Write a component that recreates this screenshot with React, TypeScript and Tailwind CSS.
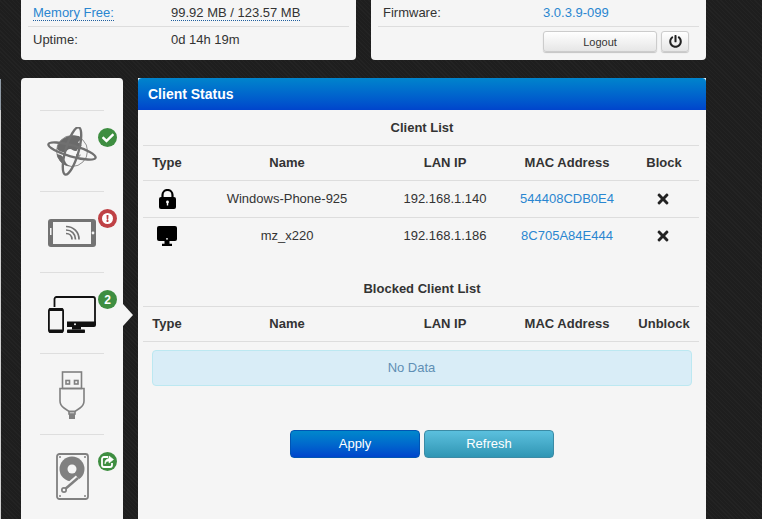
import React from "react";
import { FaCheck, FaTimes, FaPowerOff, FaExclamation } from "react-icons/fa";

const blue = "text-[#2a86d0]";
const thCols = "grid grid-cols-[48px_192px_124px_120px_1fr] items-center text-center";

function Badge({ color, children }: { color: string; children: React.ReactNode }) {
  return (
    <span
      className="absolute left-[58px] top-[17px] flex h-[19px] w-[19px] items-center justify-center rounded-full text-[12px] font-bold text-white"
      style={{ background: color }}
    >
      {children}
    </span>
  );
}

function Globe() {
  return (
    <svg width="50" height="50" viewBox="0 0 50 50" fill="none">
      <circle cx="25" cy="24" r="15.500" fill="#f5f5f5" stroke="#8f8f8f" strokeWidth="1" />
      <path d="M10 22C11 13 19 8.500 27 8.500c3.500 0 6 .8 8 2.500-1 2-3 2.500-4 4.500 1.500 1 3.500 1 3.500 3.500-2 2-4 2.500-5 5-3 .5-4.500-2-6.500-2-3 0-3 3-5 3-3.500 0-6-.5-8.500-3.500z" fill="#6a6a6a" />
      <path d="M9.800 27c2.500.5 5 1 6.200 3 1 3 2.500 4 3 6 1 1.500 3 2.500 5 3.300C16 39 11 33.500 9.800 27z" fill="#6a6a6a" />
      <path d="M29 27c2 0 3 1 5 .5-1 2-2 3.500-4 4-1-1.500-1-3-1-4.500z" fill="#9a9a9a" />
      <ellipse cx="25" cy="24" rx="24.500" ry="5.500" transform="rotate(16 25 24)" stroke="#707070" strokeWidth="2.400" />
      <ellipse cx="25" cy="24" rx="24.500" ry="6.500" transform="rotate(-74 25 24)" stroke="#707070" strokeWidth="2.400" />
    </svg>
  );
}

function Tablet() {
  return (
    <svg width="48" height="28" viewBox="0 0 48 28" fill="none">
      <rect width="48" height="28" rx="3" fill="#737373" />
      <rect x="5" y="3" width="38" height="22" fill="#f5f5f5" />
      <rect x="2" y="9" width="1.500" height="7" fill="#f5f5f5" />
      <circle cx="45" cy="14" r="1.400" fill="#f5f5f5" />
      <path d="M18 14.500c3.500 0 6 2.500 6 6M18 11c5.500 0 9.500 4 9.500 9.500M18 7.500c7.500 0 13 5.500 13 13" stroke="#737373" strokeWidth="1.700" />
    </svg>
  );
}

function Devices() {
  return (
    <svg width="48" height="37" viewBox="0 0 48 37" fill="none">
      <path d="M6.500 11V3a2 2 0 0 1 2-2H45a2 2 0 0 1 2 2v23" stroke="#111" strokeWidth="1.800" />
      <path d="M19 25.500h29V29a2 2 0 0 1-2 2H19z" fill="#111" />
      <circle cx="27" cy="28.300" r="1" fill="#f5f5f5" />
      <path d="M24 31h9v2.500h-9z" fill="#111" />
      <rect x="19" y="33.500" width="18" height="3.500" rx="0.800" fill="#111" />
      <rect x="0.900" y="12.900" width="14.200" height="23.200" rx="2" stroke="#111" strokeWidth="1.800" fill="#f5f5f5" />
      <rect x="1" y="12" width="14" height="3" rx="1" fill="#111" />
      <rect x="1" y="33.500" width="14" height="3.500" rx="1" fill="#111" />
    </svg>
  );
}

function Usb() {
  return (
    <svg width="26" height="48" viewBox="0 0 26 48" fill="none" stroke="#808080" strokeWidth="1.600">
      <rect x="3.500" y="1" width="19" height="16.500" />
      <rect x="7" y="9.500" width="3.500" height="3.500" />
      <rect x="15.500" y="9.500" width="3.500" height="3.500" />
      <path d="M1 17.500h24V30c0 3-1 5-4 7l-5 3.500h-6L5 37c-3-2-4-4-4-7z" />
      <rect x="10" y="40.500" width="6" height="2.500" />
      <rect x="10" y="43" width="6" height="5" fill="#808080" stroke="none" />
    </svg>
  );
}

function Hdd() {
  return (
    <svg width="33" height="47" viewBox="0 0 33 47" fill="none">
      <rect x="1" y="1" width="31" height="45" rx="2.500" stroke="#808080" strokeWidth="1.800" />
      <circle cx="16" cy="16" r="12.500" fill="#808080" />
      <circle cx="16" cy="16" r="4.500" fill="#f5f5f5" />
      <path d="M7 38l15-13" stroke="#f5f5f5" strokeWidth="6.500" />
      <path d="M8 37l14-12" stroke="#808080" strokeWidth="2.500" />
      <circle cx="8" cy="37" r="3" fill="#808080" />
      <circle cx="8" cy="37" r="1.300" fill="#f5f5f5" />
      <circle cx="4" cy="4" r="1" fill="#808080" />
      <circle cx="29" cy="4" r="1" fill="#808080" />
      <circle cx="4" cy="43" r="1" fill="#808080" />
      <circle cx="29" cy="43" r="1" fill="#808080" />
    </svg>
  );
}

function Lock() {
  return (
    <svg width="17" height="20" viewBox="0 0 17 20">
      <path d="M3.500 9V6a5 5 0 0 1 10 0v3" fill="none" stroke="#000" strokeWidth="2.200" />
      <rect y="8" width="17" height="12" rx="2" fill="#000" />
      <circle cx="8.500" cy="13" r="1.400" fill="#fff" />
      <rect x="7.800" y="13" width="1.400" height="3.500" fill="#fff" />
    </svg>
  );
}

function Desktop() {
  return (
    <svg width="20" height="20" viewBox="0 0 20 20">
      <rect width="20" height="15" rx="2" fill="#000" />
      <circle cx="10" cy="12.800" r="0.900" fill="#fff" />
      <path d="M7.500 15h5v2.800h2.500V20H5v-2.200h2.500z" fill="#000" />
    </svg>
  );
}

function ShareIcon() {
  return (
    <svg width="13" height="13" viewBox="0 0 13 13" fill="none" stroke="#fff" strokeWidth="1.800">
      <path d="M7 2H3a2 2 0 0 0-2 2v6a2 2 0 0 0 2 2h6a2 2 0 0 0 2-2V8" />
      <path d="M8 1l4.500 3.500L8 8V6C6 6 4.500 7 4 9c-.5-3 1-5 4-5.500z" fill="#fff" strokeWidth="0.600" />
    </svg>
  );
}

function NavItem({ icon, badge, active }: { icon: React.ReactNode; badge?: React.ReactNode; active?: boolean }) {
  return (
    <div className="relative mx-[19px] flex h-[81px] items-center justify-center border-t border-[#dedede] pt-[2px]">
      {icon}
      {badge}
      {active && (
        <span className="absolute left-[83px] top-[31px] h-0 w-0 border-y-[11px] border-l-[10px] border-y-transparent border-l-[#f5f5f5]" />
      )}
    </div>
  );
}

function TableHead({ last }: { last: string }) {
  return (
    <div className={`${thCols} h-[35px] border-b border-[#dddddd] font-bold text-[#333]`}>
      <span>Type</span>
      <span>Name</span>
      <span>LAN IP</span>
      <span>MAC Address</span>
      <span className="pl-[2px]">{last}</span>
    </div>
  );
}

export default function App() {
  return (
    <div
      className="relative flex h-[519px] w-[762px] flex-col overflow-hidden bg-[#1f1f1f] bg-[repeating-linear-gradient(45deg,#232323_0px,#232323_1px,#1e1e1e_1px,#1e1e1e_3px)] text-[13px] text-[#333]"
      style={{ fontFamily: '"Liberation Sans", Arial, sans-serif' }}
    >
      <div className="flex gap-[15px] pl-[21px]">
        <div className="h-[60px] w-[335px] rounded-b bg-[#f5f5f5]">
          <div className="mx-[7px] border-b border-[#dddddd]">
            <div className="grid h-[26px] grid-cols-[138px_1fr] items-center px-[5px]">
              <span className={`w-fit border-b border-dotted border-[#1f5f9f] leading-[15px] ${blue}`}>Memory Free:</span>
              <span className="w-fit border-b border-dotted border-[#1f5f9f] leading-[15px]">99.92 MB / 123.57 MB</span>
            </div>
          </div>
          <div className="grid h-[25px] grid-cols-[138px_1fr] items-center px-3">
            <span>Uptime:</span>
            <span>0d 14h 19m</span>
          </div>
        </div>
        <div className="h-[60px] w-[335px] rounded-b bg-[#f5f5f5]">
          <div className="mx-[7px] border-b border-[#dddddd]">
            <div className="grid h-[26px] grid-cols-[160px_1fr] items-center px-[5px]">
              <span>Firmware:</span>
              <span className={blue}>3.0.3.9-099</span>
            </div>
          </div>
          <div className="flex justify-end gap-[4px] pr-[17px] pt-[4px]">
            <button className="h-[21px] w-[114px] rounded-[3px] border border-[#cccccc] bg-gradient-to-b from-white to-[#e6e6e6] pt-[1px] text-[11px] text-[#333] shadow-[0_1px_1px_rgba(0,0,0,0.2)]">
              Logout
            </button>
            <button className="flex h-[21px] w-[28px] items-center justify-center rounded-[3px] border border-[#cccccc] bg-gradient-to-b from-white to-[#e6e6e6] shadow-[0_1px_1px_rgba(0,0,0,0.2)]">
              <FaPowerOff className="text-[13px] text-[#222]" />
            </button>
          </div>
        </div>
      </div>

      <div className="mt-[18px] flex min-h-0 flex-1">
        <div className="mr-[20px] flex w-px flex-col">
          <div className="mt-px h-[31px] bg-[#8f9aa5]" />
          <div className="flex-1 bg-[#cfcfcf]" />
        </div>
        <div className="mr-[15px] w-[102px] rounded-t bg-[#f5f5f5] pt-[32px]">
          <NavItem icon={<Globe />} badge={<Badge color="#3e8e41"><FaCheck className="text-[12px]" /></Badge>} />
          <NavItem
            icon={<Tablet />}
            badge={
              <Badge color="#bf4145">
                <span className="flex h-[11px] w-[11px] items-center justify-center rounded-full bg-white">
                  <FaExclamation className="text-[7px] text-[#bf4145]" />
                </span>
              </Badge>
            }
          />
          <NavItem icon={<Devices />} badge={<Badge color="#3e8e41">2</Badge>} active />
          <NavItem icon={<Usb />} />
          <NavItem icon={<Hdd />} badge={<Badge color="#3e8e41"><ShareIcon /></Badge>} />
        </div>

        <div className="w-[568px] bg-[#f5f5f5]">
          <div className="flex h-[32px] items-center rounded-t bg-gradient-to-b from-[#0084cc] to-[#0044cc] pl-[10px] text-[14px] font-bold text-white">
            Client Status
          </div>
          <div className="pl-[5px] pr-[7px]">
            <div className="flex h-[36px] items-center justify-center border-b border-[#dddddd] font-bold">
              <span className="pl-[2px]">Client List</span>
            </div>
            <TableHead last="Block" />
            <div className={`${thCols} h-[37px] border-b border-[#dddddd]`}>
              <span className="flex justify-center"><Lock /></span>
              <span>Windows-Phone-925</span>
              <span>192.168.1.140</span>
              <span className={blue}>544408CDB0E4</span>
              <span className="flex justify-center"><FaTimes className="text-[16px] text-[#222]" /></span>
            </div>
            <div className={`${thCols} h-[36px]`}>
              <span className="flex justify-center"><Desktop /></span>
              <span>mz_x220</span>
              <span>192.168.1.186</span>
              <span className={blue}>8C705A84E444</span>
              <span className="flex justify-center"><FaTimes className="text-[16px] text-[#222]" /></span>
            </div>
            <div className="mt-[17px] flex h-[36px] items-center justify-center border-b border-[#dddddd] font-bold">
              <span className="pl-[2px]">Blocked Client List</span>
            </div>
            <TableHead last="Unblock" />
            <div className="ml-[9px] mr-[7px] mt-[8px] flex h-[36px] items-center justify-center rounded border border-[#bce8f1] bg-[#d9edf7] pr-[21px] text-[#5f8fb4]">
              No Data
            </div>
            <div className="ml-[9px] mr-[7px] mt-[44px] flex justify-center gap-[4px]">
              <button className="h-[28px] w-[130px] rounded border border-[#0055b3] bg-gradient-to-b from-[#0088cc] to-[#0044cc] text-[13px] text-white">
                Apply
              </button>
              <button className="h-[28px] w-[130px] rounded border border-[#3b8ba5] bg-gradient-to-b from-[#5bc0de] to-[#2f96b4] text-[13px] text-white">
                Refresh
              </button>
            </div>
          </div>
        </div>
      </div>
    </div>
  );
}
